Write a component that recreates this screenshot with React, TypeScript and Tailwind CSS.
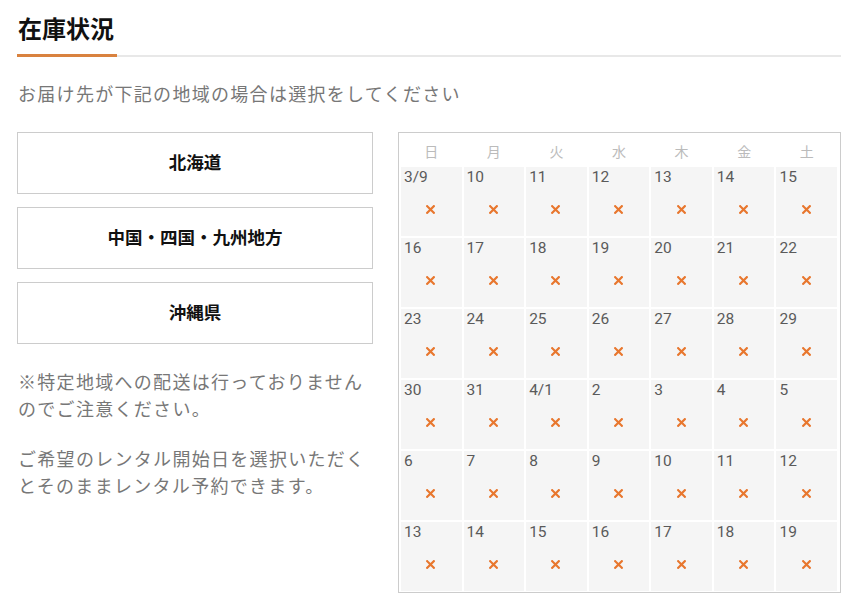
import React from "react";

const DAYS = ["日", "月", "火", "水", "木", "金", "土"];

const WEEKS: string[][] = [
  ["3/9", "10", "11", "12", "13", "14", "15"],
  ["16", "17", "18", "19", "20", "21", "22"],
  ["23", "24", "25", "26", "27", "28", "29"],
  ["30", "31", "4/1", "2", "3", "4", "5"],
  ["6", "7", "8", "9", "10", "11", "12"],
  ["13", "14", "15", "16", "17", "18", "19"],
];

const REGIONS = ["北海道", "中国・四国・九州地方", "沖縄県"];

function Cross() {
  return (
    <svg width="9" height="9" viewBox="0 0 9 9" className="block">
      <path d="M1.2 1.2 L7.8 7.8 M7.8 1.2 L1.2 7.8" stroke="#e8772e" strokeWidth="2.2" strokeLinecap="square" />
    </svg>
  );
}

export default function App() {
  return (
    <div
      className="bg-white w-[860px] h-[615px] overflow-hidden"
      style={{ fontFamily: 'Roboto, "Noto Sans CJK JP", sans-serif' }}
    >
      <div className="pl-[17px] pt-[14px] w-[841px]">
        {/* heading */}
        <div className="border-b-2 border-[#e8e8e8]">
          <h2 className="inline-block -mb-[2px] border-b-[3px] border-[#d9823f] w-[100px] pl-[1px] pb-[8px] text-[24px] leading-[32px] font-bold text-[#111] whitespace-nowrap">
            在庫状況
          </h2>
        </div>

        <p className="mt-[24px] pl-[1px] text-[18px] leading-[27px] tracking-[1.3px] text-[#777]">
          お届け先が下記の地域の場合は選択をしてください
        </p>

        <div className="mt-[24px] flex gap-[25px]">
          {/* left column */}
          <div className="w-[356px] flex flex-col">
            <div className="flex flex-col gap-[13px]">
              {REGIONS.map((r) => (
                <button
                  key={r}
                  className="h-[62px] w-full border border-[#cccccc] bg-white text-[17.5px] font-bold text-[#111]"
                >
                  {r}
                </button>
              ))}
            </div>
            <p className="mt-[25px] pl-[1px] text-[18px] leading-[27px] tracking-[1.3px] text-[#777] whitespace-nowrap">
              ※特定地域への配送は行っておりません
              <br />
              のでご注意ください。
            </p>
            <p className="mt-[23px] pl-[1px] text-[18px] leading-[27px] tracking-[1.3px] text-[#777] whitespace-nowrap">
              ご希望のレンタル開始日を選択いただく
              <br />
              とそのままレンタル予約できます。
            </p>
          </div>

          {/* calendar */}
          <div className="w-[443px] h-[461px] border border-[#cccccc] pl-[2px] pr-[3px]">
            <div className="grid grid-cols-7 gap-x-[2px] h-[34px] pt-[5px]">
              {DAYS.map((d) => (
                <div key={d} className="flex items-center justify-center text-[14px] text-[#bbbbbb]">
                  {d}
                </div>
              ))}
            </div>
            <div className="grid grid-cols-7 gap-[2px]">
              {WEEKS.flat().map((n, i) => (
                <div key={i} className="h-[69px] bg-[#f5f5f5] flex flex-col">
                  <span className="pl-[3px] text-[15.5px] leading-[20px] text-[#5a5a5a]">{n}</span>
                  <span className="mt-[18px] flex justify-center pr-[1px]">
                    <Cross />
                  </span>
                </div>
              ))}
            </div>
          </div>
        </div>
      </div>
    </div>
  );
}
